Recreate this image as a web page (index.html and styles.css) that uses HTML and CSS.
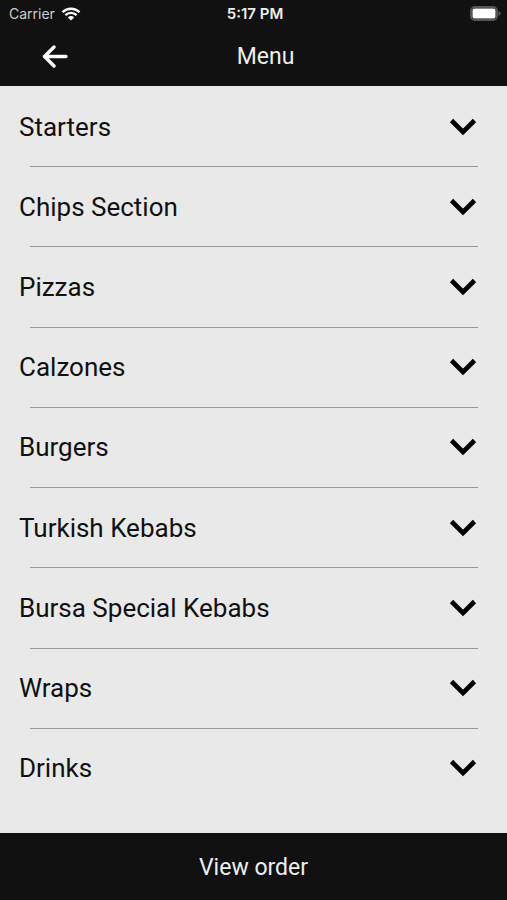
FILE: index.html
```html
<!DOCTYPE html>
<html lang="en">
<head>
    <meta charset="UTF-8">
    <meta name="viewport" content="width=device-width, initial-scale=1.0">
    <title>Menu</title>
    <link rel="stylesheet" href="styles.css">
</head>
<body>

<header class="header">
    <div class="status-bar">
        <div class="carrier">
            Carrier
            <svg class="wifi" viewBox="0 0 20 14" aria-hidden="true">
                <path d="M1.5 5.2a12.2 12.2 0 0 1 17 0M4.4 8.2a8 8 0 0 1 11.2 0"/>
                <path class="wifi-dot" d="M10 13.6 6.8 10.4a4.6 4.6 0 0 1 6.4 0z"/>
            </svg>
        </div>
        <div class="time">5:17 PM</div>
        <svg class="battery" viewBox="0 0 31 15" aria-hidden="true">
            <rect class="battery-case" x="1" y="1" width="26" height="13" rx="4"/>
            <rect class="battery-level" x="2.5" y="2.5" width="23" height="10" rx="2"/>
            <path class="battery-tip" d="M28.5 5q2.3.8 2.3 2.5t-2.3 2.5z"/>
        </svg>
    </div>
    <div class="nav-bar">
        <button class="back" type="button" aria-label="Back">
            <svg viewBox="0 0 26 24" aria-hidden="true">
                <path d="M24 11.5H3M12 2 2.5 11.5 12 21"/>
            </svg>
        </button>
        <h1 class="title">Menu</h1>
    </div>
</header>

<main class="menu">
    <button class="menu-item" type="button">Starters <svg class="chevron" viewBox="0 0 28 18" aria-hidden="true"><path d="M2.5 2.5L14 14 25.5 2.5"/></svg></button>
    <button class="menu-item" type="button">Chips Section <svg class="chevron" viewBox="0 0 28 18" aria-hidden="true"><path d="M2.5 2.5L14 14 25.5 2.5"/></svg></button>
    <button class="menu-item" type="button">Pizzas <svg class="chevron" viewBox="0 0 28 18" aria-hidden="true"><path d="M2.5 2.5L14 14 25.5 2.5"/></svg></button>
    <button class="menu-item" type="button">Calzones <svg class="chevron" viewBox="0 0 28 18" aria-hidden="true"><path d="M2.5 2.5L14 14 25.5 2.5"/></svg></button>
    <button class="menu-item" type="button">Burgers <svg class="chevron" viewBox="0 0 28 18" aria-hidden="true"><path d="M2.5 2.5L14 14 25.5 2.5"/></svg></button>
    <button class="menu-item" type="button">Turkish Kebabs <svg class="chevron" viewBox="0 0 28 18" aria-hidden="true"><path d="M2.5 2.5L14 14 25.5 2.5"/></svg></button>
    <button class="menu-item" type="button">Bursa Special Kebabs <svg class="chevron" viewBox="0 0 28 18" aria-hidden="true"><path d="M2.5 2.5L14 14 25.5 2.5"/></svg></button>
    <button class="menu-item" type="button">Wraps <svg class="chevron" viewBox="0 0 28 18" aria-hidden="true"><path d="M2.5 2.5L14 14 25.5 2.5"/></svg></button>
    <button class="menu-item" type="button">Drinks <svg class="chevron" viewBox="0 0 28 18" aria-hidden="true"><path d="M2.5 2.5L14 14 25.5 2.5"/></svg></button>
</main>

<button class="view-order" type="button">View order</button>

</body>
</html>
```

FILE: styles.css
```css
* {
    box-sizing: border-box;
}
body {
    display: flex;
    flex-direction: column;
    min-height: 100vh;
    margin: 0;
    background: #e9e9e9;
    color: #111;
    font-family: Roboto, "Liberation Sans", sans-serif;
}
button {
    border: 0;
    background: none;
    color: inherit;
    font: inherit;
    cursor: pointer;
}
.header {
    background: #111;
    color: #eee;
}
.status-bar {
    display: grid;
    grid-template-columns: 1fr auto 1fr;
    align-items: center;
    height: 27px;
    padding: 0 6px 0 9px;
    font-family: Inter, "Liberation Sans", sans-serif;
    font-size: 14px;
}
.carrier {
    display: flex;
    align-items: center;
    gap: 6px;
    color: #ccc;
}
.wifi {
    width: 20px;
    height: 14px;
    fill: none;
    stroke: #fff;
    stroke-width: 2.4;
}
.wifi-dot {
    fill: #fff;
    stroke: none;
}
.time {
    font-size: 15px;
    font-weight: 600;
}
.battery {
    justify-self: end;
    width: 31px;
    height: 15px;
}
.battery-case {
    fill: none;
    stroke: #555;
    stroke-width: 2;
}
.battery-level {
    fill: #fff;
}
.battery-tip {
    fill: #555;
}
.nav-bar {
    display: grid;
    grid-template-columns: 1fr auto 1fr;
    align-items: center;
    height: 59px;
    padding: 0 6px 0 30px;
}
.back {
    justify-self: start;
    padding: 12px;
}
.back svg {
    display: block;
    width: 26px;
    height: 24px;
    fill: none;
    stroke: #fff;
    stroke-width: 3.4;
    stroke-linecap: round;
    stroke-linejoin: round;
}
.title {
    margin: 0;
    font-size: 23px;
    font-weight: 400;
}
.menu {
    display: grid;
    flex: 1;
    grid-auto-rows: 1fr;
    padding-bottom: 25px;
}
.menu-item {
    display: flex;
    align-items: center;
    justify-content: space-between;
    width: 100%;
    min-height: 80px;
    padding: 1px 30px 0 19px;
    font-size: 26px;
    text-align: left;
}
.menu-item + .menu-item {
    background: linear-gradient(#999, #999) 30px 0 / calc(100% - 59px) 1px no-repeat;
}
.chevron {
    width: 28px;
    height: 18px;
    fill: none;
    stroke: #000;
    stroke-width: 4.6;
}
.view-order {
    height: 67px;
    padding-top: 2px;
    background: #111;
    color: #eee;
    font-size: 23px;
}
```
